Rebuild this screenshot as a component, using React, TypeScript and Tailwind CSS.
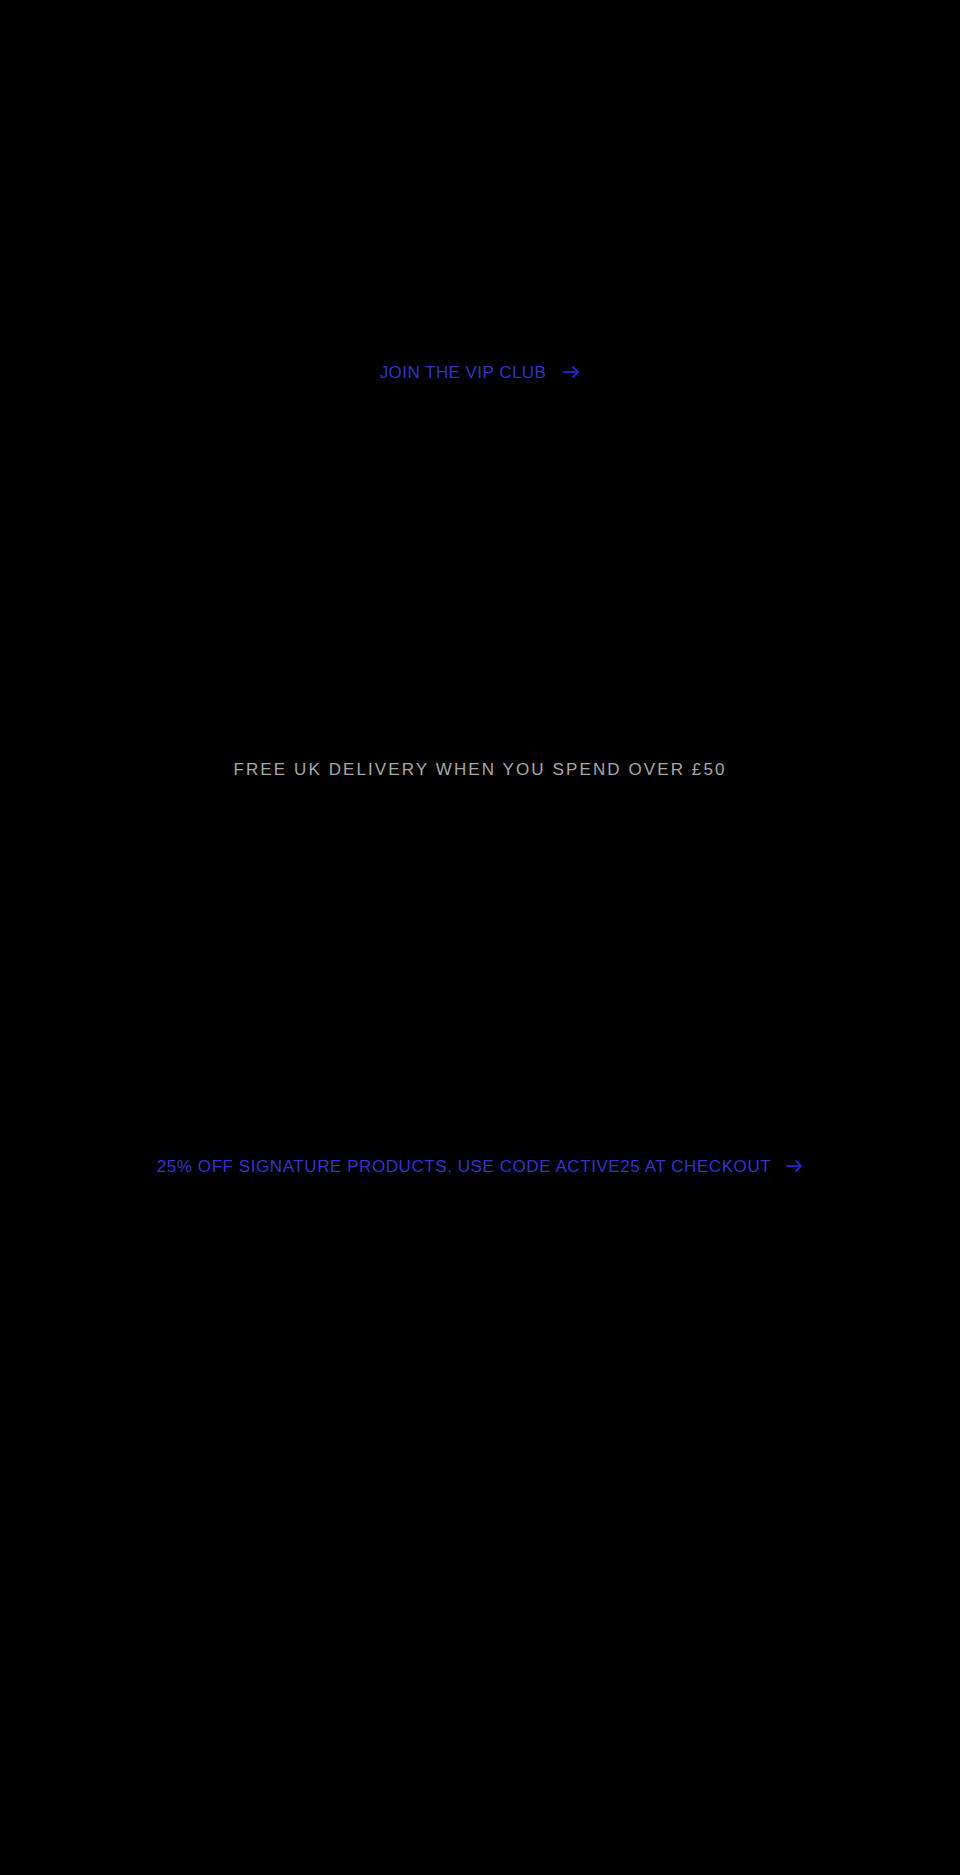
import React from "react";

function Arrow() {
  return (
    <svg width="18" height="14" viewBox="0 0 18 14" fill="none" className="shrink-0">
      <path d="M1 7H16" stroke="#2424d8" strokeWidth="1.8" />
      <path d="M10.5 1.5L16 7L10.5 12.5" stroke="#2424d8" strokeWidth="1.8" />
    </svg>
  );
}

export default function App() {
  return (
    <div
      className="min-h-[1875px] w-full bg-black pt-[173px]"
      style={{ fontFamily: '"Liberation Sans", Arial, sans-serif' }}
    >
      <div className="flex h-[398px] items-center justify-center">
        <a className="flex items-center gap-[16px] text-[17px] leading-none tracking-[0.45px] text-[#3333cc] uppercase">
          <span>JOIN THE VIP CLUB</span>
          <Arrow />
        </a>
      </div>
      <div className="flex h-[396px] items-center justify-center">
        <p className="text-[17px] leading-none tracking-[2.1px] text-[#a8a8a8] uppercase">
          FREE UK DELIVERY WHEN YOU SPEND OVER £50
        </p>
      </div>
      <div className="flex h-[398px] items-center justify-center">
        <a className="flex items-center gap-[14px] text-[17px] leading-none tracking-[0.57px] text-[#3333cc] uppercase">
          <span>25% OFF SIGNATURE PRODUCTS. USE CODE ACTIVE25 AT CHECKOUT</span>
          <Arrow />
        </a>
      </div>
    </div>
  );
}
